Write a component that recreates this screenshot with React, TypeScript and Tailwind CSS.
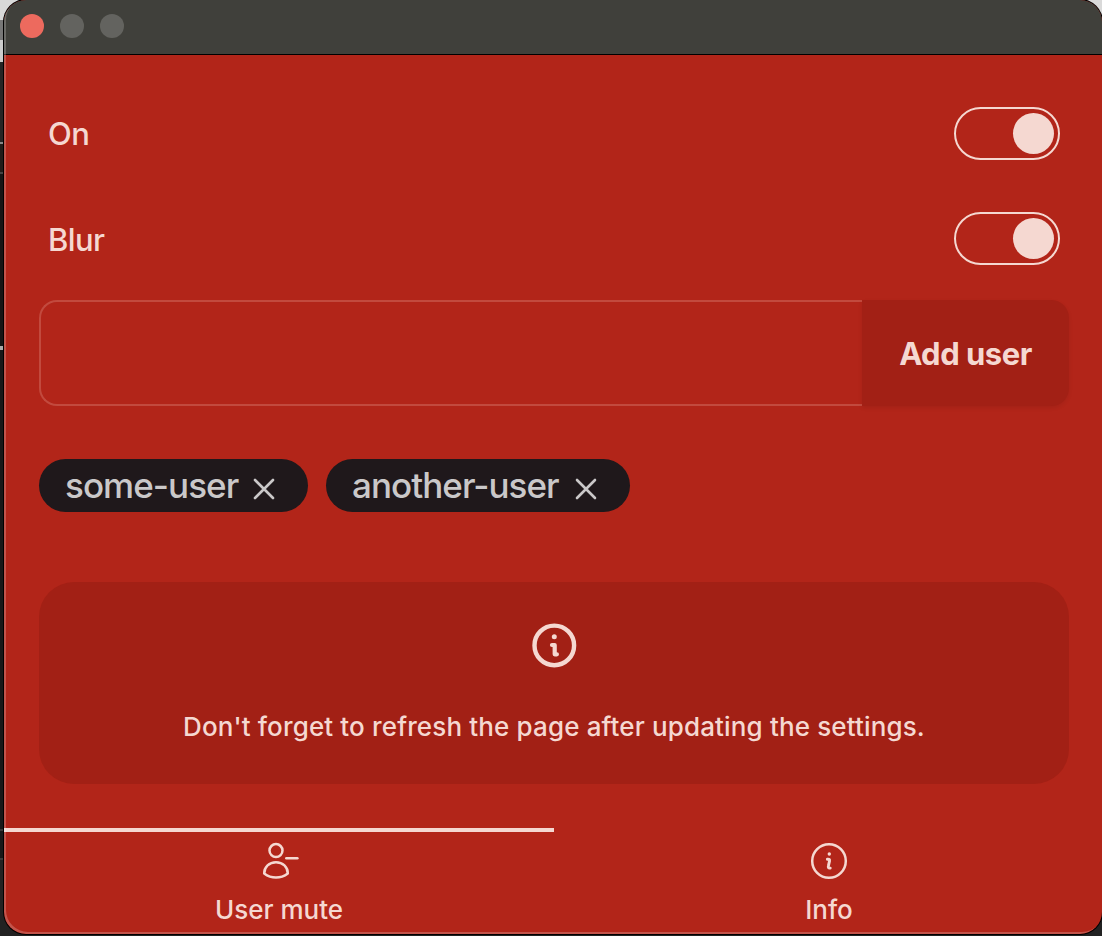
import type { ReactNode } from "react";

function Toggle({ label, labelClass = "pt-px" }: { label: string; labelClass?: string }) {
  return (
    <div className="flex h-[53px] items-center justify-between pl-[9px] pr-[9px]">
      <span className={`text-[31px] font-[450] leading-[40px] tracking-[-0.6px] ${labelClass}`}>{label}</span>
      <button
        role="switch"
        aria-checked="true"
        aria-label={label}
        className="flex h-[53px] w-[106px] items-center justify-end rounded-full border-2 border-[#f5d8d1] pr-[4px]"
      >
        <span className="size-[41px] rounded-full bg-[#f5d8d1]" />
      </button>
    </div>
  );
}

function Chip({ name, width }: { name: string; width: string }) {
  return (
    <div className={`flex h-[53px] items-center rounded-full bg-[#1f181b] pl-[26px] text-[#cac8c9] ${width}`}>
      <span className="flex-1 whitespace-nowrap pb-px text-[35px] font-[450] leading-[50px] tracking-[-0.95px]">{name}</span>
      <svg className="mr-[33px] mt-[6px] size-[22px] shrink-0" viewBox="0 0 22 22" fill="none" stroke="currentColor" strokeWidth="2.6" strokeLinecap="round">
        <path d="M2 2 20 20M20 2 2 20" />
      </svg>
    </div>
  );
}

function AlertIcon() {
  return (
    <svg className="size-[44px] overflow-visible" viewBox="0 0 44 44" fill="none" stroke="currentColor" strokeLinecap="round" strokeLinejoin="round">
      <circle cx="22.3" cy="21.4" r="19.8" strokeWidth="4.4" />
      <circle cx="22.3" cy="12.7" r="2.5" fill="currentColor" stroke="none" />
      <path d="M20 21h2.7v9.3h2.2" strokeWidth="4.2" />
    </svg>
  );
}

function UserMinusIcon() {
  return (
    <svg className="size-[38px] overflow-visible" viewBox="0 0 38 38" fill="none" stroke="currentColor" strokeWidth="2.5" strokeLinecap="round" strokeLinejoin="round">
      <circle cx="16" cy="8.6" r="6.5" />
      <path d="M26.3 16.3H37.4" />
      <path d="M4.2 31.4C4.2 24.9 9.2 20.2 16 20.2S27.8 24.9 27.8 31.4C24.5 33.9 20.5 35.5 16 35.5S7.5 33.9 4.2 31.4Z" />
    </svg>
  );
}

function InfoIcon() {
  return (
    <svg className="size-[38px]" viewBox="0 0 38 38" fill="none" stroke="currentColor" strokeWidth="2.5" strokeLinecap="round" strokeLinejoin="round">
      <circle cx="19" cy="19" r="16.8" />
      <circle cx="19.3" cy="12" r="1.7" fill="currentColor" stroke="none" />
      <path d="M17.4 17.2c1.7-.3 2.5.2 2.1 1.9l-1 4.3c-.6 2.3.1 3 1.7 2.7" strokeWidth="2.9" />
    </svg>
  );
}

function Tab({ label, icon, active = false }: { label: string; icon: ReactNode; active?: boolean }) {
  return (
    <button className={`flex h-[106px] w-[550px] shrink-0 flex-col items-center border-t-4 pt-[10px] ${active ? "border-[#f5d8d1]" : "border-transparent"}`}>
      {icon}
      <span className="mt-[13px] text-[26px] font-[450] leading-[34px]">{label}</span>
    </button>
  );
}

export default function App() {
  return (
    <div className="relative h-[936px] w-[1102px] overflow-hidden bg-[linear-gradient(to_bottom,#d9d9d9_0_20px,#777_20px_40px,#ccc_40px_62px,#252525_62px_142px,#888_142px_144px,#211c19_144px_172px,#444_172px_174px,#151515_174px_346px,#aaa_346px_350px,#181818_350px_829px,#3a3a3a_829px_831px,#181818_831px_858px,#3a3a3a_858px_860px,#222_860px)] pl-1 font-['Inter','Liberation_Sans',sans-serif] text-[#f5d8d1]">
      <main className="relative flex h-[934px] w-[1098px] flex-col overflow-hidden rounded-[22px] bg-[#b22519] shadow-[0_0_0_1px_#000]">
        <header className="flex h-[55px] shrink-0 items-start gap-4 border-b border-black bg-[#40403b] pl-4 pt-[14px]">
          <span className="size-6 rounded-full bg-[#ed6a5e]" />
          <span className="size-6 rounded-full bg-[#63635f]" />
          <span className="size-6 rounded-full bg-[#63635f]" />
        </header>
        <section className="flex w-[1100px] flex-col pl-[35px] pr-[35px] pt-[52px]">
          <div className="flex flex-col gap-[52px]">
            <Toggle label="On" />
            <Toggle label="Blur" labelClass="pt-[3px]" />
          </div>
          <div className="mt-[35px] flex h-[106px]">
            <input aria-label="User" className="min-w-0 flex-1 rounded-l-[18px] border-2 border-r-0 border-[#c24a3e] bg-transparent px-6 text-[31px] outline-none" />
            <button className="w-[207px] rounded-r-[18px] bg-[#a22015] pt-[2px] text-[31px] font-bold tracking-[-0.5px] shadow-[0_2px_4px_rgba(0,0,0,0.08)]">Add user</button>
          </div>
          <div className="mt-[53px] flex gap-[18px]">
            <Chip name="some-user" width="w-[269px]" />
            <Chip name="another-user" width="w-[304px]" />
          </div>
          <div className="mt-[70px] flex h-[202px] flex-col items-center rounded-[35px] bg-[#a22015] pt-[42px]">
            <AlertIcon />
            <p className="mt-[41px] whitespace-nowrap text-[26px] font-[450] leading-[36px] tracking-[0.14px]">Don't forget to refresh the page after updating the settings.</p>
          </div>
        </section>
        <nav className="mt-[44px] flex">
          <Tab label="User mute" icon={<UserMinusIcon />} active />
          <Tab label="Info" icon={<InfoIcon />} />
        </nav>
        <div className="pointer-events-none absolute inset-0 rounded-[22px] shadow-[inset_2px_-2px_0_rgba(255,255,255,0.22)]" />
      </main>
    </div>
  );
}
